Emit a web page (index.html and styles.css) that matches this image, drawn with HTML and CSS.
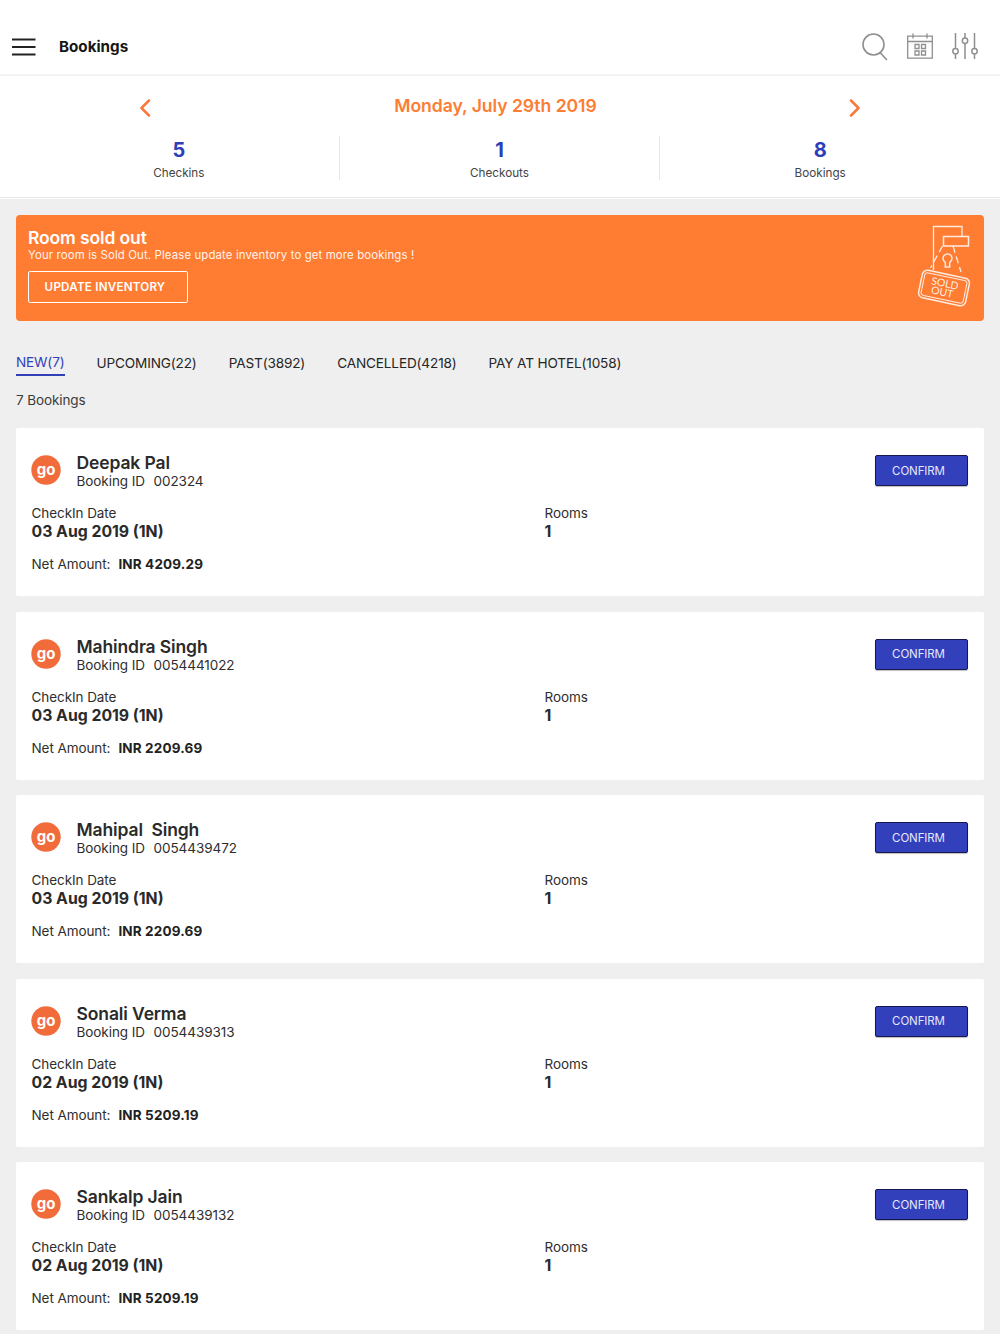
FILE: index.html
```html
<!DOCTYPE html>
<html lang="en">
<head>
<meta charset="utf-8">
<title>Bookings</title>
<link rel="stylesheet" href="styles.css">
</head>
<body>
<div class="top">
  <header class="appbar">
    <svg class="burger" width="24" height="18" viewBox="0 0 24 18"><path d="M0 1.500h23.500M0 9h23.500M0 16.500h23.500" stroke="#222" stroke-width="2"/></svg>
    <h1 class="title">Bookings</h1>
    <div class="tools">
      <svg width="26" height="28" viewBox="0 0 26 28" fill="none" stroke="#8f8f8f" stroke-width="1.6"><circle cx="11.500" cy="11.500" r="10.500"/><path d="M18.500 20l6 6.500" stroke-linecap="round"/></svg>
      <svg width="26" height="26" viewBox="0 0 26 26" fill="none" stroke="#8f8f8f" stroke-width="1.3"><path d="M.7 3.200h24.600v22H.7zM.7 8.500h24.600M6 .5v5M20 .5v5"/><path d="M8 11.500h4v4H8zM14.500 11.500h4v4h-4zM8 18h4v4H8zM14.500 18h4v4h-4z"/></svg>
      <svg width="26" height="26" viewBox="0 0 26 26" fill="none" stroke="#8f8f8f" stroke-width="1.5"><path d="M3.500 0v15.500M3.500 21v5M13 0v5M13 10.500v15.500M22.500 0v15.500M22.500 21v5"/><circle cx="3.500" cy="18.300" r="2.700"/><circle cx="13" cy="7.700" r="2.700"/><circle cx="22.500" cy="18.300" r="2.700"/></svg>
    </div>
  </header>
  <section class="summary">
    <div class="date-row">
      <svg class="chev" width="12" height="18" viewBox="0 0 12 18"><path d="M10 1.500L2.500 9l7.500 7.500" fill="none" stroke="#f9793a" stroke-width="2.500" stroke-linecap="round" stroke-linejoin="round"/></svg>
      <div class="date">Monday, July 29th 2019</div>
      <svg class="chev" width="12" height="18" viewBox="0 0 12 18"><path d="M2 1.500L9.500 9 2 16.500" fill="none" stroke="#f9793a" stroke-width="2.500" stroke-linecap="round" stroke-linejoin="round"/></svg>
    </div>
    <div class="stats">
      <div class="stat"><div class="num">5</div><div class="lab">Checkins</div></div>
      <div class="stat"><div class="num">1</div><div class="lab">Checkouts</div></div>
      <div class="stat"><div class="num">8</div><div class="lab">Bookings</div></div>
    </div>
  </section>
</div>
<main class="content">
  <section class="banner">
    <div class="banner-text">
      <h2 class="banner-title">Room sold out</h2>
      <p class="banner-sub">Your room is Sold Out. Please update inventory to get more bookings !</p>
      <button class="update">UPDATE INVENTORY</button>
    </div>
    <svg class="soldout" width="56" height="84" viewBox="0 0 56 84" fill="none" stroke="#fff" stroke-opacity=".85" stroke-width="1.300">
      <path d="M16.500 45V1.500h28.500V11"/>
      <path d="M26.500 11.500h25v9.500h-25z" stroke-width="1.500"/>
      <path d="M25.500 21l-12 22M36 21l8 26" stroke-dasharray="7 4"/>
      <path d="M30.500 29a4.500 4.500 0 0 1 4.500 4.500 4.500 4.500 0 0 1-2.300 3.800V42h-4.400v-4.700a4.500 4.500 0 0 1-2.300-3.800 4.500 4.500 0 0 1 4.500-4.500z" stroke-width="1.500"/>
      <g transform="rotate(12 27 63)">
        <rect x="3" y="49" width="48" height="28" rx="5" stroke-width="1.500"/>
        <rect x="5.500" y="51.500" width="43" height="23" rx="3" stroke-width="1"/>
        <text x="27" y="62" text-anchor="middle" class="sold-text">SOLD</text>
        <text x="26" y="71" text-anchor="middle" class="sold-text">OUT</text>
      </g>
    </svg>
  </section>
  <nav class="tabs">
    <span class="tab active">NEW(7)</span>
    <span class="tab">UPCOMING(22)</span>
    <span class="tab">PAST(3892)</span>
    <span class="tab">CANCELLED(4218)</span>
    <span class="tab">PAY AT HOTEL(1058)</span>
  </nav>
  <div class="count">7 Bookings</div>
  <div class="cards">
    <article class="card">
      <div class="card-head">
        <svg class="go" width="30" height="30" viewBox="0 0 30 30"><circle cx="15" cy="15" r="14.700" fill="#f26b3a"/><text x="15" y="19.600" text-anchor="middle" class="go-text">go</text></svg>
        <div class="who"><div class="name">Deepak Pal</div><div class="bid">Booking ID<span class="bid-no">002324</span></div></div>
        <button class="confirm">CONFIRM</button>
      </div>
      <div class="info"><div><div class="k">CheckIn Date</div><div class="v">03 Aug 2019 (1N)</div></div><div><div class="k">Rooms</div><div class="v">1</div></div></div>
      <div class="net">Net Amount:<b class="amt">INR 4209.29</b></div>
    </article>
    <article class="card">
      <div class="card-head">
        <svg class="go" width="30" height="30" viewBox="0 0 30 30"><circle cx="15" cy="15" r="14.700" fill="#f26b3a"/><text x="15" y="19.600" text-anchor="middle" class="go-text">go</text></svg>
        <div class="who"><div class="name">Mahindra Singh</div><div class="bid">Booking ID<span class="bid-no">0054441022</span></div></div>
        <button class="confirm">CONFIRM</button>
      </div>
      <div class="info"><div><div class="k">CheckIn Date</div><div class="v">03 Aug 2019 (1N)</div></div><div><div class="k">Rooms</div><div class="v">1</div></div></div>
      <div class="net">Net Amount:<b class="amt">INR 2209.69</b></div>
    </article>
    <article class="card">
      <div class="card-head">
        <svg class="go" width="30" height="30" viewBox="0 0 30 30"><circle cx="15" cy="15" r="14.700" fill="#f26b3a"/><text x="15" y="19.600" text-anchor="middle" class="go-text">go</text></svg>
        <div class="who"><div class="name">Mahipal&nbsp; Singh</div><div class="bid">Booking ID<span class="bid-no">0054439472</span></div></div>
        <button class="confirm">CONFIRM</button>
      </div>
      <div class="info"><div><div class="k">CheckIn Date</div><div class="v">03 Aug 2019 (1N)</div></div><div><div class="k">Rooms</div><div class="v">1</div></div></div>
      <div class="net">Net Amount:<b class="amt">INR 2209.69</b></div>
    </article>
    <article class="card">
      <div class="card-head">
        <svg class="go" width="30" height="30" viewBox="0 0 30 30"><circle cx="15" cy="15" r="14.700" fill="#f26b3a"/><text x="15" y="19.600" text-anchor="middle" class="go-text">go</text></svg>
        <div class="who"><div class="name">Sonali Verma</div><div class="bid">Booking ID<span class="bid-no">0054439313</span></div></div>
        <button class="confirm">CONFIRM</button>
      </div>
      <div class="info"><div><div class="k">CheckIn Date</div><div class="v">02 Aug 2019 (1N)</div></div><div><div class="k">Rooms</div><div class="v">1</div></div></div>
      <div class="net">Net Amount:<b class="amt">INR 5209.19</b></div>
    </article>
    <article class="card">
      <div class="card-head">
        <svg class="go" width="30" height="30" viewBox="0 0 30 30"><circle cx="15" cy="15" r="14.700" fill="#f26b3a"/><text x="15" y="19.600" text-anchor="middle" class="go-text">go</text></svg>
        <div class="who"><div class="name">Sankalp Jain</div><div class="bid">Booking ID<span class="bid-no">0054439132</span></div></div>
        <button class="confirm">CONFIRM</button>
      </div>
      <div class="info"><div><div class="k">CheckIn Date</div><div class="v">02 Aug 2019 (1N)</div></div><div><div class="k">Rooms</div><div class="v">1</div></div></div>
      <div class="net">Net Amount:<b class="amt">INR 5209.19</b></div>
    </article>
  </div>
</main>
</body>
</html>
```
FILE: styles.css
```css
* { box-sizing: border-box; }
html, body { margin: 0; padding: 0; }
body { background: #efefef; font-family: Inter, "Liberation Sans", sans-serif; color: #2a2a2a; min-height: 1334px; }
.go-text { font: 700 15px Inter, sans-serif; fill: #fff; stroke: none; }
.sold-text { font: 400 10.500px Lato, Inter, sans-serif; fill: #fff; stroke: none; fill-opacity: .9; }

.top { background: #fff; height: 199px; }
.appbar { height: 76px; padding: 29px 22.500px 0 12px; display: flex; align-items: flex-start; border-bottom: 2px solid #f3f3f3; }
.burger { margin-top: 9px; flex: none; }
.title { margin: 0 0 0 23px; font-size: 15.200px; line-height: 36px; font-weight: 700; color: #161616; }
.tools { margin-left: auto; display: flex; gap: 19px; align-items: flex-start; padding-top: 4px; }

.summary { height: 122px; border-bottom: 1px solid #e9e9e9; }
.date-row { display: flex; justify-content: space-between; align-items: flex-start; padding: 0 139px; height: 60px; }
.chev { margin-top: 23px; }
.date { font-size: 17.600px; font-weight: 600; color: #fb7e33; line-height: 24px; margin-top: 18px; margin-right: 9px; letter-spacing: -.05px; }
.stats { display: grid; grid-template-columns: repeat(3, 1fr); padding: 0 20px 0 18px; }
.stat { height: 44px; text-align: center; border-left: 1px solid #e6e6e6; }
.stat:first-child { border-left: 0; padding-left: 1px; }
.num { font-size: 20px; font-weight: 700; color: #2e3eb8; line-height: 26px; margin-top: 1px; }
.lab { font-size: 11.700px; color: #444; line-height: 18px; margin-top: 1px; }

.content { padding: 16px 16px 0; }
.banner { height: 106px; background: #ff7c33; border-radius: 4px; display: flex; justify-content: space-between; padding: 11px 12px 0; }
.banner-title { margin: 0; font-size: 17.500px; line-height: 24px; font-weight: 600; color: #fff; letter-spacing: -.13px; }
.banner-sub { margin: -1px 0 0; font-size: 11.400px; line-height: 12px; color: #fff; opacity: .92; letter-spacing: .13px; }
.update { display: block; margin-top: 10px; width: 160px; height: 32px; background: transparent; border: 1px solid #fff; border-radius: 2px; color: #fff; font: 600 11.600px Inter, sans-serif; letter-spacing: .24px; padding: 0 6px 0 0; }
.soldout { margin-top: -1px; margin-right: -1px; }

.tabs { display: flex; gap: 32px; margin-top: 32px; height: 23px; }
.tab { font-size: 13.600px; line-height: 20px; color: #262626; letter-spacing: -.15px; }
.tab.active { color: #3240b8; border-bottom: 2px solid #3240b8; height: 23px; line-height: 18px; }
.count { margin-top: 15px; font-size: 13.500px; line-height: 19px; color: #3b3b3b; height: 20px; letter-spacing: -.1px; }

.cards { margin-top: 17px; display: flex; flex-direction: column; gap: 15.600px; }
.card { height: 168px; background: #fff; padding: 26px 16px 0 15.500px; border-radius: 2px; flex: none; }
.card-head { display: flex; align-items: flex-start; }
.go { flex: none; margin: 1px 0 0 -.5px; }
.who { margin-left: 15.500px; flex: 1; }
.name { font-size: 17.500px; line-height: 18px; font-weight: 600; color: #2a2a2a; letter-spacing: -.12px; }
.bid { font-size: 13.500px; line-height: 18px; color: #2e2e2e; letter-spacing: -.06px; }
.bid-no { margin-left: 8.500px; }
.confirm { flex: none; width: 93px; height: 31px; margin-top: 1px; padding: 0 6px 0 0; background: #3240bb; border: 1px solid #15184f; border-radius: 2px; color: #e4e7fb; font: 400 11.500px Inter, sans-serif; letter-spacing: -.1px; box-shadow: 0 1px 1px rgba(0,0,0,.25); }
.info { display: grid; grid-template-columns: 513px 1fr; margin-top: 14px; }
.k { font-size: 13.500px; line-height: 18px; color: #2e2e2e; letter-spacing: -.07px; }
.v { margin-top: 1px; font-size: 15.800px; line-height: 18px; font-weight: 700; color: #2a2a2a; }
.net { margin-top: 14px; font-size: 13.500px; line-height: 18px; color: #2e2e2e; letter-spacing: -.08px; }
.amt { margin-left: 8px; font-weight: 700; color: #222; letter-spacing: .15px; }
```
